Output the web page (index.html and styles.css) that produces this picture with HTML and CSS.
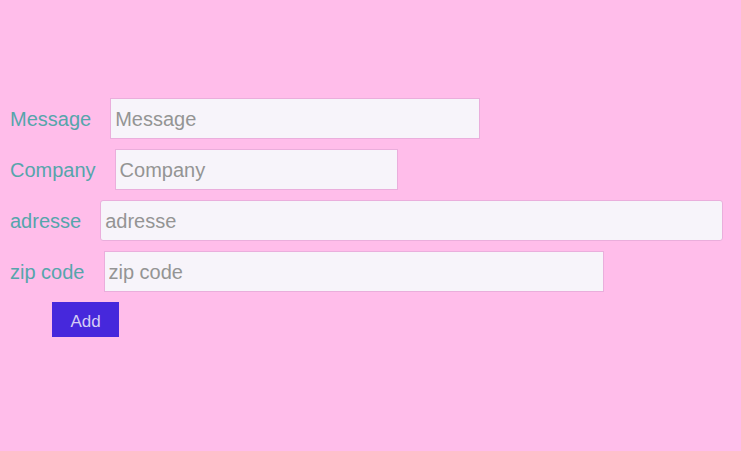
FILE: index.html
```html
<!DOCTYPE html>
<html lang="en">
<head>
<meta charset="utf-8">
<title>Add</title>
<link rel="stylesheet" href="styles.css">
</head>
<body>
<form class="form">
  <div class="row"><label for="message">Message</label><input class="field message" id="message" type="text" placeholder="Message"></div>
  <div class="row"><label for="company">Company</label><input class="field company" id="company" type="text" placeholder="Company"></div>
  <div class="row"><label for="adresse">adresse</label><input class="field adresse" id="adresse" type="text" placeholder="adresse"></div>
  <div class="row"><label for="zip">zip code</label><input class="field zip" id="zip" type="text" placeholder="zip code"></div>
  <button class="add" type="button">Add</button>
</form>
</body>
</html>
```
FILE: styles.css
```css
body {
  margin: 0;
  background: #ffbdea;
  font-family: "Liberation Sans", Arial, sans-serif;
}
.form {
  display: flex;
  flex-direction: column;
  align-items: flex-start;
  gap: 10px;
  padding: 98px 18px 0 10px;
}
.row {
  display: flex;
  align-items: center;
  gap: 19px;
  width: 100%;
  color: #56a5ab;
  font-size: 20px;
}
.row label {
  padding-top: 2px;
}
.field {
  box-sizing: border-box;
  height: 41px;
  min-width: 0;
  padding: 2px 4px 0;
  border: 1px solid #eaaedc;
  border-radius: 0;
  background: #f7f4fa;
  color: #444;
  font: inherit;
}
.field::placeholder {
  color: #949494;
  opacity: 1;
}
.message { width: 370px; }
.company { width: 283px; }
.adresse {
  flex: 1;
  border-radius: 3px;
}
.zip { width: 500px; }
.add {
  min-width: 67px;
  height: 35px;
  margin-left: 42px;
  padding: 4px 18px 0;
  border: 0;
  background: #4628dc;
  color: #d5cdf5;
  font: 17px "Liberation Sans", Arial, sans-serif;
}
```
